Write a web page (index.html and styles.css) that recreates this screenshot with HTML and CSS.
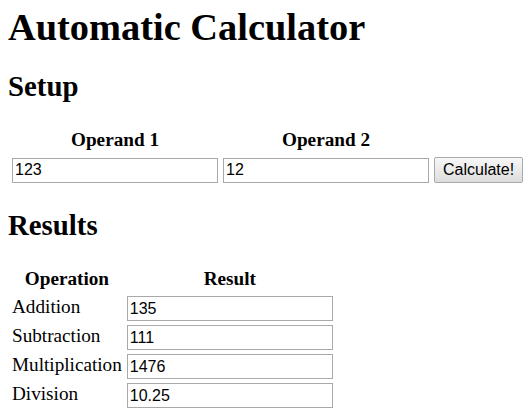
FILE: index.html
```html
<!DOCTYPE html>
<html>
<head>
<meta charset="utf-8">
<title>Automatic Calculator</title>
<link rel="stylesheet" href="styles.css">
</head>
<body class="page">
<h1 class="title">Automatic Calculator</h1>
<h2 class="section section-first">Setup</h2>
<table class="setup">
  <tr><th>Operand 1</th><th>Operand 2</th><th></th></tr>
  <tr>
    <td><input class="field" type="text" value="123"></td>
    <td><input class="field" type="text" value="12"></td>
    <td><button class="btn">Calculate!</button></td>
  </tr>
</table>
<h2 class="section">Results</h2>
<table class="results">
  <tr><th>Operation</th><th>Result</th></tr>
  <tr><td class="label">Addition</td><td><input class="field" type="text" value="135"></td></tr>
  <tr><td class="label">Subtraction</td><td><input class="field" type="text" value="111"></td></tr>
  <tr><td class="label">Multiplication</td><td><input class="field" type="text" value="1476"></td></tr>
  <tr><td class="label">Division</td><td><input class="field" type="text" value="10.25"></td></tr>
</table>
</body>
</html>
```
FILE: styles.css
```css
html {
  overflow: hidden;
}
.page {
  margin: 0 0 8px 8px;
  font-family: "Liberation Serif", serif;
  font-size: 19.2px;
  color: #000;
  background: #fff;
}
.title {
  font-size: 38.4px;
  font-weight: bold;
  margin: 5px 0 0;
}
.section {
  font-size: 28.8px;
  font-weight: bold;
  margin: 23px 0;
}
.section-first {
  margin-top: 21px;
}
.setup, .results {
  border-collapse: separate;
  border-spacing: 3px 2px;
}
.setup th, .results th {
  font-weight: bold;
  text-align: center;
  padding: 1px 1px 3px;
}
.setup td, .results td {
  padding: 1px;
}
.results .label {
  vertical-align: top;
}
.field {
  font-family: "Liberation Sans", Arial, sans-serif;
  font-size: 16px;
  border: 1px solid #a9a9a9;
  padding: 1px 2px;
  margin: 0;
  width: 206px;
  height: 25px;
  box-sizing: border-box;
  background: #fff;
  color: #000;
}
.btn {
  font-family: "Liberation Sans", Arial, sans-serif;
  font-size: 16px;
  border: 1px solid #a9a9a9;
  border-radius: 2px;
  background: linear-gradient(#f7f7f7, #dddddd);
  padding: 1px 8px;
  height: 26px;
  margin: 0;
  color: #000;
  white-space: nowrap;
}
```
